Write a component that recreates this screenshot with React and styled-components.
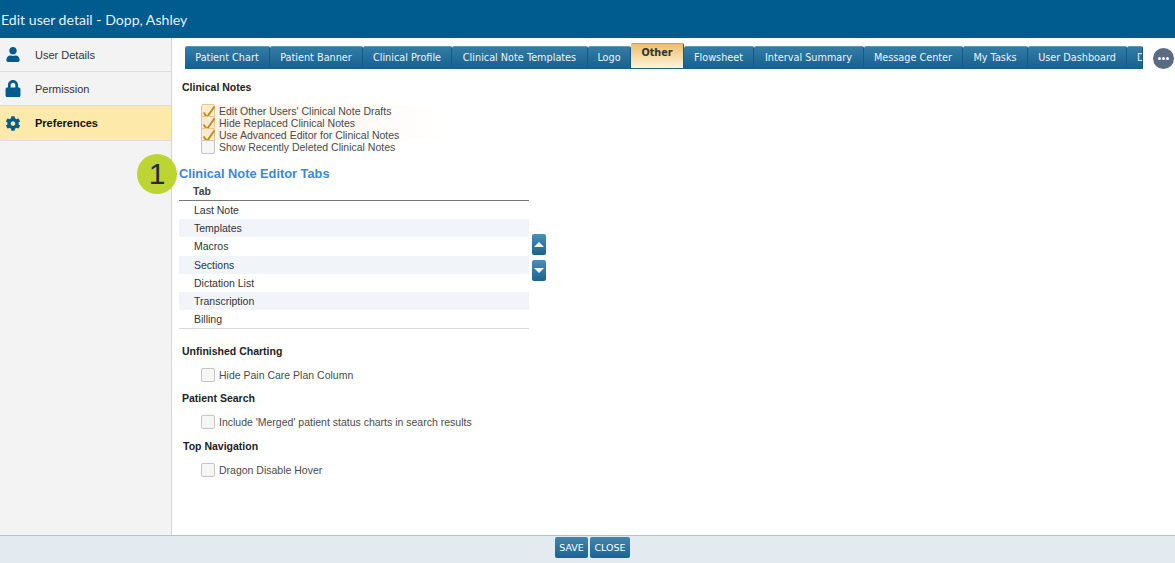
import React from 'react'
import styled, { createGlobalStyle } from 'styled-components'
import { FaUser, FaLock, FaCog } from 'react-icons/fa'

const GlobalStyles = createGlobalStyle`
	html, body {
		margin: 0;
		padding: 0;
		background: #fff;
		font-family: "Liberation Sans", Arial, sans-serif;
	}
`

const Page = styled.div`
	display: flex;
	flex-direction: column;
	width: 1175px;
	height: 563px;
	overflow: hidden;
`

const TitleBar = styled.header`
	flex: 0 0 38px;
	box-sizing: border-box;
	display: flex;
	align-items: center;
	padding: 0 0 0 1px;
	background: #005b8f;
	color: #e8f1f6;
	font: 14.1px Lato, sans-serif;
`

const Body = styled.div`
	flex: 1;
	display: flex;
	min-height: 0;
`

const Sidebar = styled.nav`
	flex: 0 0 172px;
	box-sizing: border-box;
	background: #f3f3f3;
	border-right: 1px solid #d5d5d5;
`

const SideItem = styled.div`
	box-sizing: border-box;
	display: flex;
	align-items: center;
	height: ${p => (p.$active ? '35px' : '34px')};
	padding-left: 5px;
	border-bottom: 1px solid #dcdcdc;
	background: ${p => (p.$active ? '#fde9a9' : '#f3f3f3')};
	color: ${p => (p.$active ? '#111' : '#333')};
	font-size: 11px;
	font-weight: ${p => (p.$active ? 700 : 400)};
	svg {
		flex: 0 0 16px;
		margin-right: 14px;
		color: #005b8f;
	}
`

const Main = styled.main`
	flex: 1;
	min-width: 0;
	padding: 5px 0 0 7px;
`

const TabRow = styled.div`
	display: flex;
	align-items: flex-end;
	height: 26px;
	margin-left: 6px;
`

const Tabs = styled.div`
	display: flex;
	align-items: flex-end;
	width: 958px;
	height: 26px;
	overflow: hidden;
	border-bottom: 1px solid #1d618b;
	box-sizing: content-box;
`

const Tab = styled.div`
	flex: 0 0 ${p => p.$w}px;
	box-sizing: border-box;
	display: flex;
	align-items: ${p => (p.$active ? 'flex-start' : 'center')};
	justify-content: ${p => (p.$clip ? 'flex-start' : 'center')};
	height: ${p => (p.$active ? '25px' : '22px')};
	padding: ${p => (p.$active ? '3px 0 0' : p.$clip ? '0 0 0 10px' : '0')};
	overflow: hidden;
	border-radius: 2px 2px 0 0;
	border-right: 1px solid #175b85;
	background: ${p => (p.$active
		? 'linear-gradient(#edbe6c, #f7dca8 55%, #fdf3e2)'
		: 'linear-gradient(#337ca6, #17618f)')};
	border-top: 1px solid ${p => (p.$active ? '#c9a260' : '#5c98ba')};
	color: ${p => (p.$active ? '#333' : '#edf4f8')};
	font: ${p => (p.$active ? 700 : 400)} 9.7px "DejaVu Sans", sans-serif;
	white-space: nowrap;
`

const MoreButton = styled.div`
	flex: 0 0 21px;
	height: 21px;
	margin: 0 0 0 10px;
	display: flex;
	align-items: center;
	justify-content: center;
	gap: 1px;
	border-radius: 50%;
	background: #5b6b85;
	i {
		width: 3px;
		height: 3px;
		border-radius: 50%;
		background: #fff;
	}
`

const Content = styled.div`
	width: 390px;
	margin-top: 12px;
	margin-left: 3px;
	position: relative;
`

const GroupTitle = styled.div`
	height: 13px;
	line-height: 13px;
	margin-top: ${p => p.$top || 0}px;
	margin-left: ${p => p.$x || 0}px;
	color: #222;
	font-size: 10.5px;
	font-weight: 700;
`

const CheckList = styled.div`
	margin: ${p => p.$top}px 0 ${p => p.$bottom}px 19px;
`

const CheckRow = styled.label`
	display: flex;
	align-items: center;
	height: ${p => p.$h || 12}px;
	width: 260px;
	background: ${p => (p.$on ? 'linear-gradient(90deg, #fdf3e6, #fff 95%)' : 'none')};
	color: #4a4a4a;
	font-size: 10.5px;
	white-space: nowrap;
`

const Box = styled.span`
	position: relative;
	flex: 0 0 14px;
	box-sizing: border-box;
	width: 14px;
	height: 14px;
	margin-right: 4px;
	border: 1px solid ${p => (p.$on ? '#ecc48e' : '#c4c4c4')};
	border-radius: 2px;
	background: ${p => (p.$on ? '#fcebd2' : '#f6f6f6')};
	svg {
		position: absolute;
		left: 0;
		top: 0;
	}
`

const EditorTitle = styled.h2`
	margin: 13px 0 0 -3px;
	height: 16px;
	line-height: 16px;
	color: #3c88d8;
	font-size: 12.8px;
	font-weight: 700;
`

const Badge = styled.div`
	position: absolute;
	left: -45px;
	top: 73px;
	width: 40px;
	height: 40px;
	display: flex;
	align-items: center;
	justify-content: center;
	border-radius: 50%;
	background: #bdd532;
	color: #1d2a44;
	font: 30px "Liberation Sans", sans-serif;
`

const TableWrap = styled.div`
	display: flex;
	align-items: center;
	gap: 3px;
	margin-left: -3px;
`

const Table = styled.div`
	width: 350px;
	border-bottom: 1px solid #d9d9d9;
`

const HeadCell = styled.div`
	height: 18px;
	line-height: 18px;
	padding-left: 14px;
	border-bottom: 1px solid #777;
	color: #444;
	font-size: 10.5px;
	font-weight: 700;
`

const Cell = styled.div`
	height: 18.2px;
	line-height: 18px;
	padding-left: 15px;
	background: ${p => (p.$odd ? '#f1f5fa' : '#fff')};
	color: #333;
	font-size: 10.5px;
`

const Arrows = styled.div`
	display: flex;
	flex-direction: column;
	gap: 5px;
	padding-top: 3px;
`

const ArrowButton = styled.div`
	width: 14px;
	height: 21px;
	display: flex;
	align-items: center;
	justify-content: center;
	border-radius: 2px;
	background: linear-gradient(#4b8fb8, #19648f);
	&::after {
		content: '';
		border-left: 5px solid transparent;
		border-right: 5px solid transparent;
		${p => (p.$down ? 'border-top: 5px solid #fff;' : 'border-bottom: 5px solid #fff;')}
	}
`

const Footer = styled.footer`
	flex: 0 0 28px;
	box-sizing: border-box;
	display: flex;
	justify-content: center;
	gap: 2px;
	padding: 1px 0 0 10px;
	border-top: 1px solid #a9c4d8;
	background: #e4ebf0;
`

const FootButton = styled.button`
	width: ${p => p.$w}px;
	height: 21px;
	padding: 0;
	border: 0;
	border-radius: 2px;
	background: linear-gradient(#4285ac, #1a6590);
	color: #fff;
	font: 9.5px "DejaVu Sans", sans-serif;
`

const Check = () => (
	<svg width="14" height="14" viewBox="0 0 14 14" fill="none">
		<path d="M1.5 7.5 L5 12 L12.5 1.5" stroke="#bd9013" strokeWidth="2" />
	</svg>
)

const tabs = [
	['Patient Chart', 85], ['Patient Banner', 93], ['Clinical Profile', 89],
	['Clinical Note Templates', 136], ['Logo', 43], ['Other', 53, true],
	['Flowsheet', 70], ['Interval Summary', 110], ['Message Center', 99],
	['My Tasks', 65], ['User Dashboard', 99],
]

const notes = [
	["Edit Other Users' Clinical Note Drafts", true],
	['Hide Replaced Clinical Notes', true],
	['Use Advanced Editor for Clinical Notes', true],
	['Show Recently Deleted Clinical Notes', false],
]

const rows = ['Last Note', 'Templates', 'Macros', 'Sections', 'Dictation List', 'Transcription', 'Billing']

const App = () => {
	return (
		<Page>
			<GlobalStyles />
			<TitleBar>Edit user detail - Dopp, Ashley</TitleBar>
			<Body>
				<Sidebar>
					<SideItem><FaUser size={15} />User Details</SideItem>
					<SideItem><FaLock size={17} />Permission</SideItem>
					<SideItem $active><FaCog size={15} />Preferences</SideItem>
				</Sidebar>
				<Main>
					<TabRow>
						<Tabs>
							{tabs.map(([label, w, active]) => (
								<Tab key={label} $w={w} $active={active}>{label}</Tab>
							))}
							<Tab $w={16} $clip>Dragon</Tab>
						</Tabs>
						<MoreButton><i /><i /><i /></MoreButton>
					</TabRow>
					<Content>
						<GroupTitle>Clinical Notes</GroupTitle>
						<CheckList $top={11} $bottom={0}>
							{notes.map(([label, on]) => (
								<CheckRow key={label} $on={on}>
									<Box $on={on}>{on && <Check />}</Box>
									{label}
								</CheckRow>
							))}
						</CheckList>
						<Badge>1</Badge>
						<EditorTitle>Clinical Note Editor Tabs</EditorTitle>
						<TableWrap>
							<Table>
								<HeadCell>Tab</HeadCell>
								{rows.map((r, i) => <Cell key={r} $odd={i % 2 === 1}>{r}</Cell>)}
							</Table>
							<Arrows>
								<ArrowButton />
								<ArrowButton $down />
							</Arrows>
						</TableWrap>
						<GroupTitle $top={16}>Unfinished Charting</GroupTitle>
						<CheckList $top={10} $bottom={10}>
							<CheckRow $h={14}><Box />Hide Pain Care Plan Column</CheckRow>
						</CheckList>
						<GroupTitle>Patient Search</GroupTitle>
						<CheckList $top={10} $bottom={11}>
							<CheckRow $h={14}><Box />Include 'Merged' patient status charts in search results</CheckRow>
						</CheckList>
						<GroupTitle $x={1}>Top Navigation</GroupTitle>
						<CheckList $top={10} $bottom={0}>
							<CheckRow $h={14}><Box />Dragon Disable Hover</CheckRow>
						</CheckList>
					</Content>
				</Main>
			</Body>
			<Footer>
				<FootButton $w={33}>SAVE</FootButton>
				<FootButton $w={40}>CLOSE</FootButton>
			</Footer>
		</Page>
	)
}

export default App
